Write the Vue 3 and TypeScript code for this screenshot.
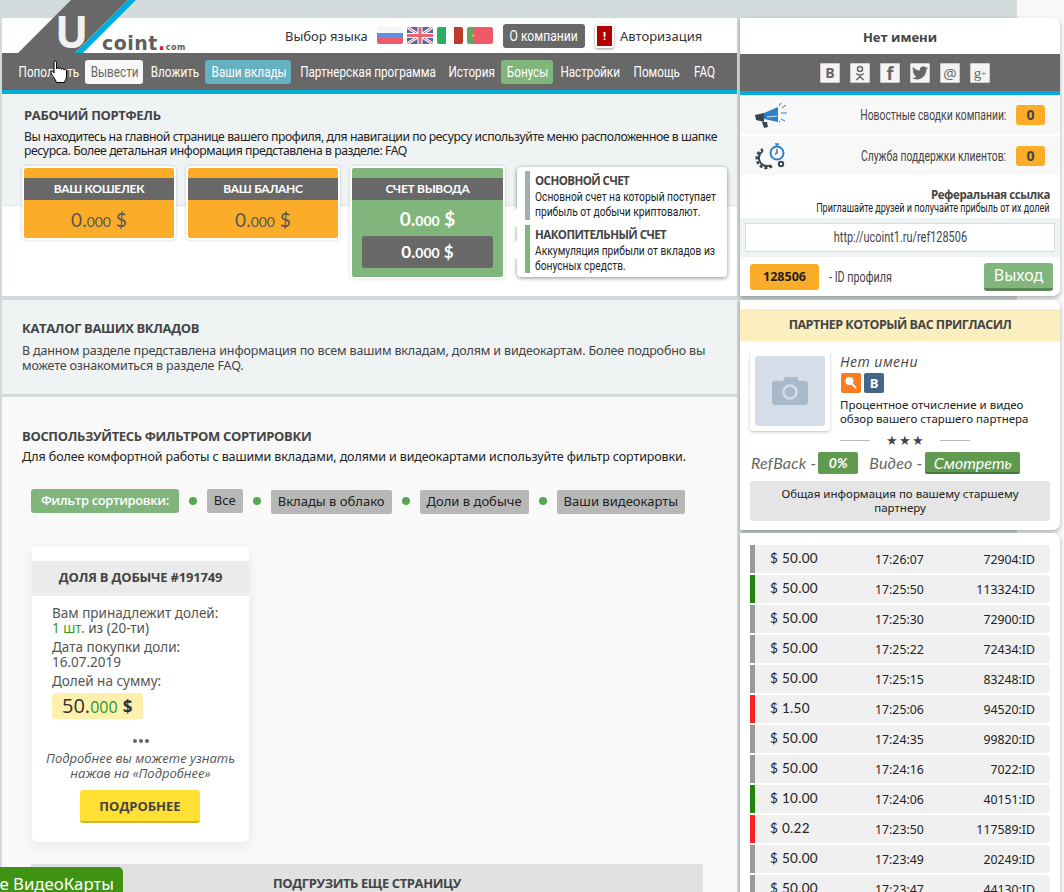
<template>
  <div class="page">
    <!-- logo lies over the header and pokes out above it -->
    <div class="logo">
      <svg width="140" height="53" viewBox="0 0 140 53">
        <polygon points="18,53 71,0 128,0 75,53" fill="#686868" />
        <polygon points="75,53 128,0 136,0 83,53" fill="#00aedb" />
      </svg>
      <span class="logo-u">U</span>
      <span class="logo-coint">coint<i>.</i><small>com</small></span>
    </div>

    <main class="left">
      <header class="top">
        <span class="lang-label">Выбор языка</span>
        <div class="flags">
          <svg width="26" height="17" viewBox="0 0 26 17" class="flag">
            <rect width="26" height="6" fill="#f4f6fa" />
            <rect y="6" width="26" height="5" fill="#5b8fe0" />
            <rect y="11" width="26" height="6" fill="#ef5a6b" />
          </svg>
          <svg width="26" height="17" viewBox="0 0 26 17" class="flag">
            <rect width="26" height="17" fill="#4a6aa8" />
            <path d="M0 0L26 17M26 0L0 17" stroke="#fff" stroke-width="3" />
            <path d="M0 0L26 17M26 0L0 17" stroke="#e9636f" stroke-width="1" />
            <path d="M13 0V17M0 8.500H26" stroke="#fff" stroke-width="5" />
            <path d="M13 0V17M0 8.500H26" stroke="#e9636f" stroke-width="3" />
          </svg>
          <svg width="26" height="17" viewBox="0 0 26 17" class="flag">
            <rect width="9" height="17" fill="#27ae60" />
            <rect x="9" width="8" height="17" fill="#fff" />
            <rect x="17" width="9" height="17" fill="#c0392b" />
          </svg>
          <svg width="26" height="17" viewBox="0 0 26 17" class="flag">
            <rect width="6" height="17" fill="#5fa85f" />
            <rect x="6" width="20" height="17" fill="#ef5a6b" />
            <circle cx="6" cy="8.500" r="1.300" fill="#e8b23a" />
          </svg>
        </div>
        <button class="company"><span class="squeeze">О компании</span></button>
        <span class="alert"><b>!</b></span>
        <span class="auth">Авторизация</span>
      </header>

      <nav class="nav">
        <a
          v-for="item in navItems"
          :key="item.label"
          class="nav-item"
          :class="item.kind"
          :style="{ width: item.width + 'px' }"
        ><span class="squeeze">{{ item.label }}</span></a>
      </nav>

      <section class="portfolio">
        <div class="portfolio-head">
          <h2>РАБОЧИЙ ПОРТФЕЛЬ</h2>
          <p>Вы находитесь на главной странице вашего профиля, для навигации по ресурсу используйте меню расположенное в шапке<br />ресурса. Более детальная информация представлена в разделе: FAQ</p>
        </div>
        <div class="wallets">
          <div v-for="w in wallets" :key="w" class="wallet">
            <div class="wallet-title">{{ w }}</div>
            <div class="wallet-sum">0.<small>000</small> $</div>
          </div>
          <div class="wallet green">
            <div class="wallet-title">СЧЕТ ВЫВОДА</div>
            <div class="wallet-sum">0.<small>000</small> $</div>
            <div class="wallet-sub">0.<small>000</small> $</div>
          </div>
          <div class="hint">
            <div class="hint-row grey">
              <h4>ОСНОВНОЙ СЧЕТ</h4>
              <p class="squeeze-left">Основной счет на который поступает<br />прибыль от добычи криптовалют.</p>
            </div>
            <div class="hint-row lime">
              <h4>НАКОПИТЕЛЬНЫЙ СЧЕТ</h4>
              <p class="squeeze-left">Аккумуляция прибыли от вкладов из<br />бонусных средств.</p>
            </div>
          </div>
        </div>
      </section>

      <section class="catalog">
        <h2>КАТАЛОГ ВАШИХ ВКЛАДОВ</h2>
        <p>В данном разделе представлена информация по всем вашим вкладам, долям и видеокартам. Более подробно вы<br />можете ознакомиться в разделе FAQ.</p>
      </section>

      <section class="filter">
        <h2>ВОСПОЛЬЗУЙТЕСЬ ФИЛЬТРОМ СОРТИРОВКИ</h2>
        <p>Для более комфортной работы с вашими вкладами, долями и видеокартами используйте фильтр сортировки.</p>
        <div class="chips">
          <span class="chip-main">Фильтр сортировки:</span>
          <template v-for="c in chips" :key="c">
            <i class="dot"></i>
            <span class="chip">{{ c }}</span>
          </template>
        </div>

        <article class="share">
          <h3>ДОЛЯ В ДОБЫЧЕ #191749</h3>
          <div class="share-body">
            <p>Вам принадлежит долей:<br /><span class="ok">1 шт.</span> из (20-ти)</p>
            <p>Дата покупки доли:<br />16.07.2019</p>
            <p>Долей на сумму:</p>
            <div class="share-sum">50.<small>000</small> <b>$</b></div>
          </div>
          <div class="share-dots"><i></i><i></i><i></i></div>
          <div class="share-note">Подробнее вы можете узнать<br />нажав на «Подробнее»</div>
          <button class="more">ПОДРОБНЕЕ</button>
        </article>

        <div class="load">ПОДГРУЗИТЬ ЕЩЕ СТРАНИЦУ</div>
      </section>
    </main>

    <aside class="right">
      <div class="box profile">
        <div class="name">Нет имени</div>
        <div class="socials">
          <span class="soc">В</span>
          <span class="soc">
            <svg width="12" height="16" viewBox="0 0 12 16" fill="none" stroke="#666" stroke-width="1.500">
              <circle cx="6" cy="4" r="2.500" />
              <path d="M2 8.500c2.500 1.800 5.500 1.800 8 0M6 10v1.500M2.500 15L6 11.500L9.500 15" />
            </svg>
          </span>
          <span class="soc fb">f</span>
          <span class="soc">
            <svg width="16" height="14" viewBox="0 0 24 20">
              <path fill="#666" d="M24 2.400c-.9.400-1.800.7-2.800.800 1-.6 1.800-1.600 2.200-2.700-1 .6-2 1-3.100 1.200A4.900 4.900 0 0 0 11.900 6.200C7.800 6 4.200 4 1.700.900c-1.300 2.200-.7 5.100 1.500 6.600-.8 0-1.600-.2-2.200-.6 0 2.300 1.600 4.500 4 5-.7.200-1.500.2-2.200.1.600 2 2.400 3.400 4.600 3.400A9.900 9.900 0 0 1 0 17.500 14 14 0 0 0 7.500 19.700c9.100 0 14.300-7.700 14-14.600 1-.7 1.800-1.600 2.500-2.700z" />
            </svg>
          </span>
          <span class="soc at">@</span>
          <span class="soc gp">g<sup>+</sup></span>
        </div>
        <div class="stat">
          <svg width="34" height="30" viewBox="0 0 34 30" fill="none">
            <path d="M0 15l9-2v9l-8-2z" fill="#3b4652" />
            <path d="M9 13l14-6v15l-14-3z" fill="#2f7fc4" />
            <path d="M12 17l10-1" stroke="#d8e6f3" stroke-width="1" />
            <path d="M7 22h5l1 5-4 1z" fill="#3b4652" />
            <path d="M24 6l2-3M27 8l4-3M26 13h6M26 19l4 2M24 21l1 1" stroke="#2f7fc4" stroke-width="1" />
          </svg>
          <span class="stat-label">Новостные сводки компании:</span>
          <b class="badge">0</b>
        </div>
        <div class="stat">
          <svg width="34" height="30" viewBox="0 0 34 30" fill="none">
            <path d="M16 24a8 8 0 1 1-8-14" stroke="#3b4652" stroke-width="2" />
            <path d="M17 25a9.500 9.500 0 1 1-9-16.500" stroke="#3b4652" stroke-width="2.500" stroke-dasharray="3 2" />
            <circle cx="22" cy="12" r="6.500" stroke="#2f7fc4" stroke-width="2" />
            <path d="M22 8v4l-2 1M20 3h4M22 3v2" stroke="#2f7fc4" stroke-width="1.500" />
            <circle cx="26" cy="23" r="2.200" stroke="#3b4652" stroke-width="2" />
          </svg>
          <span class="stat-label">Служба поддержки клиентов:</span>
          <b class="badge">0</b>
        </div>
        <div class="ref-text">
          <b>Реферальная ссылка</b>
          <span>Приглашайте друзей и получайте прибыль от их долей</span>
        </div>
        <div class="ref-strip">
          <div class="ref-input"><span class="squeeze">http://ucoint1.ru/ref128506</span></div>
        </div>
        <div class="ident">
          <b class="ident-num">128506</b>
          <span class="ident-label">- ID профиля</span>
          <button class="logout">Выход</button>
        </div>
      </div>

      <div class="box partner">
        <h3>ПАРТНЕР КОТОРЫЙ ВАС ПРИГЛАСИЛ</h3>
        <div class="partner-main">
          <div class="photo">
            <div class="photo-in">
              <svg width="36" height="28" viewBox="0 0 36 28">
                <path fill="#a9b9c9" d="M3 4h8l2-4h12l2 4h6a3 3 0 0 1 3 3v18a3 3 0 0 1-3 3H3a3 3 0 0 1-3-3V7a3 3 0 0 1 3-3z" />
                <circle cx="18" cy="15" r="6.500" fill="none" stroke="#d5dee8" stroke-width="2.500" />
              </svg>
            </div>
          </div>
          <div class="partner-info">
            <div class="partner-name">Нет имени</div>
            <div class="partner-icons">
              <span class="pi orange">
                <svg width="14" height="14" viewBox="0 0 14 14">
                  <circle cx="5.500" cy="5" r="4" fill="#fff" />
                  <path d="M8 8l4 4" stroke="#fff" stroke-width="2" />
                </svg>
              </span>
              <span class="pi blue">В</span>
            </div>
            <p>Процентное отчисление и видео<br />обзор вашего старшего партнера</p>
          </div>
        </div>
        <div class="stars"><i></i><span>★★★</span><i></i></div>
        <div class="refback">
          <em>RefBack -</em>
          <b class="tag">0%</b>
          <em class="video">Видео -</em>
          <b class="tag watch">Смотреть</b>
        </div>
        <div class="partner-note">Общая информация по вашему старшему партнеру</div>
      </div>

      <div class="box feed">
        <div v-for="row in feed" :key="row.time" class="feed-row" :class="row.color">
          <span class="amount">$ {{ row.amount }}</span>
          <span class="time">{{ row.time }}</span>
          <span class="uid">{{ row.id }}:ID</span>
        </div>
      </div>
    </aside>

    <div class="float-btn">Все ВидеоКарты</div>

    <svg class="cursor" width="20" height="24" viewBox="0 0 20 24">
      <path fill="#fff" stroke="#000" stroke-width="1" d="M4 1.500c1 -1 2.500 -.5 2.500 1V9c0-1.500 2.500-1.500 2.500 0 0-1.500 2.500-1.500 2.500 0.500 0-1.500 2.500-1.500 2.500 0.500 0-1 2.500-1 2.500 1v5c0 3-1.500 4-2 6.500H6.500C5.500 19 2 15.500 1 13c-.5-1.500 1-2.500 2-1.500l1 1.500z" />
    </svg>
  </div>
</template>

<script setup lang="ts">
interface NavItem {
  label: string;
  width: number;
  kind?: string;
}

interface FeedRow {
  amount: string;
  time: string;
  id: number;
  color: string;
}

const navItems: NavItem[] = [
  { label: 'Пополнить', width: 73 },
  { label: 'Вывести', width: 58, kind: 'light' },
  { label: 'Вложить', width: 60 },
  { label: 'Ваши вклады', width: 86, kind: 'teal' },
  { label: 'Партнерская программа', width: 149 },
  { label: 'История', width: 58 },
  { label: 'Бонусы', width: 52, kind: 'lime' },
  { label: 'Настройки', width: 71 },
  { label: 'Помощь', width: 59 },
  { label: 'FAQ', width: 35 },
];

const wallets = ['ВАШ КОШЕЛЕК', 'ВАШ БАЛАНС'];
const chips = ['Все', 'Вклады в облако', 'Доли в добыче', 'Ваши видеокарты'];

const feed: FeedRow[] = [
  { amount: '50.00', time: '17:26:07', id: 72904, color: 'gray' },
  { amount: '50.00', time: '17:25:50', id: 113324, color: 'green' },
  { amount: '50.00', time: '17:25:30', id: 72900, color: 'gray' },
  { amount: '50.00', time: '17:25:22', id: 72434, color: 'gray' },
  { amount: '50.00', time: '17:25:15', id: 83248, color: 'gray' },
  { amount: '1.50', time: '17:25:06', id: 94520, color: 'red' },
  { amount: '50.00', time: '17:24:35', id: 99820, color: 'gray' },
  { amount: '50.00', time: '17:24:16', id: 7022, color: 'gray' },
  { amount: '10.00', time: '17:24:06', id: 40151, color: 'green' },
  { amount: '0.22', time: '17:23:50', id: 117589, color: 'red' },
  { amount: '50.00', time: '17:23:49', id: 20249, color: 'gray' },
  { amount: '50.00', time: '17:23:47', id: 44130, color: 'gray' },
];
</script>

<style scoped>
.page {
  position: relative;
  width: 1064px;
  height: 892px;
  overflow: hidden;
  display: flex;
  align-items: flex-start;
  box-sizing: border-box;
  padding: 18px 0 0 2px;
  gap: 3px;
  background: linear-gradient(90deg, #d2dadc 1017px, #f8f8f8 1017px);
  font-family: "Noto Sans", "Open Sans", sans-serif;
  color: #222;
}

/* no narrow face is installed, so the condensed labels are squeezed Roboto */
.squeeze {
  flex: none;
  white-space: nowrap;
  font-family: "Roboto", sans-serif;
  transform: scaleX(0.78);
}

.squeeze-left {
  white-space: nowrap;
  font-family: "Roboto", sans-serif;
  transform: scaleX(0.76);
  transform-origin: left top;
}

.logo {
  position: absolute;
  left: 0;
  top: 0;
  width: 190px;
  height: 53px;
  z-index: 2;
}

.logo svg {
  display: block;
}

.logo-u {
  position: absolute;
  left: 55px;
  top: 6px;
  font: bold 44px/50px "Open Sans", sans-serif;
  color: #f1f1f1;
}

.logo-coint {
  position: absolute;
  left: 102px;
  top: 32px;
  font: bold 19px/22px "DejaVu Sans", sans-serif;
  color: #5f5f5f;
  letter-spacing: 0.5px;
}

.logo-coint i {
  color: #e02020;
  font-style: normal;
}

.logo-coint small {
  font-size: 8px;
  letter-spacing: 0.5px;
}

.left {
  width: 735px;
  flex: none;
}

.top {
  height: 35px;
  background: #fff;
  display: flex;
  align-items: center;
  box-sizing: border-box;
  padding-left: 283px;
  font-size: 13px;
}

.lang-label {
  width: 92px;
  flex: none;
  color: #333;
}

.flags {
  display: flex;
  gap: 4px;
  margin-right: 10px;
}

.flag {
  border-radius: 2px;
  display: block;
}

.company {
  width: 82px;
  height: 24px;
  border: 0;
  padding: 0;
  border-radius: 3px;
  background: #686868;
  color: #fff;
  font-size: 15.500px;
  line-height: 24px;
  display: flex;
  justify-content: center;
  margin-right: 10px;
}

.alert {
  width: 15px;
  height: 20px;
  background: #b30000;
  border: 2px solid #fff;
  border-radius: 2px;
  box-shadow: 0 1px 3px rgba(0, 0, 0, 0.4);
  color: #fff;
  font-size: 11px;
  line-height: 20px;
  text-align: center;
  margin-right: 6px;
}

.auth {
  color: #333;
}

.nav {
  height: 37px;
  background: #686868;
  border-bottom: 4px solid #00aedb;
  display: flex;
  align-items: center;
  gap: 1px;
  padding-left: 9px;
}

.nav-item {
  height: 24px;
  line-height: 24px;
  flex: none;
  display: flex;
  justify-content: center;
  border-radius: 3px;
  color: #fff;
  font-size: 15px;
}

.nav-item .squeeze {
  transform: translateX(1px) scaleX(0.78);
}

.nav-item.light {
  background: #f8f8f8;
  color: #686868;
}

.nav-item.teal {
  background: #66b1c1;
}

.nav-item.lime {
  background: #80b57b;
}

.portfolio {
  height: 202px;
  background: linear-gradient(#eff3f4 111px, #dfe6e9 111px, #dfe6e9 112px, #fff 112px);
  box-sizing: border-box;
  padding: 12px 22px 0;
}

h2 {
  margin: 0;
  font-size: 13px;
  line-height: 18px;
  font-weight: 700;
  color: #444;
  font-family: "Open Sans", sans-serif;
  letter-spacing: -0.35px;
}

.portfolio-head p,
.catalog p,
.filter > p {
  margin: 0;
  font-size: 12.500px;
  line-height: 14px;
  color: #222;
  white-space: nowrap;
}

.portfolio-head p {
  font-size: 12.200px;
  letter-spacing: -0.42px;
}

.portfolio-head h2 {
  margin-bottom: 6px;
}

.wallets {
  display: flex;
  align-items: flex-start;
  gap: 10px;
  margin: 8px 0 0 -2px;
}

.wallet {
  width: 154px;
  flex: none;
  box-sizing: border-box;
  border: 2px solid #fff;
  border-radius: 4px;
  background: #fbad2a;
  padding-top: 10px;
  height: 74px;
  box-shadow: 0 0 3px rgba(0, 0, 0, 0.2);
  text-align: center;
  color: #565656;
}

.wallet-title {
  height: 22px;
  background: #686868;
  color: #fff;
  font: bold 12px/22px "Lato", sans-serif;
  letter-spacing: -0.3px;
}

.wallet-sum {
  font: 19px/39px "Lato", sans-serif;
}

.wallet-sum small {
  font-size: 14px;
}

.wallet.green {
  height: 113px;
  width: 155px;
  background: #80b57b;
  color: #fff;
}

.wallet.green .wallet-sum {
  font-weight: 700;
  line-height: 37px;
  margin-bottom: -3px;
}

.wallet-sub {
  margin: 0 10px;
  height: 32px;
  background: #686868;
  border-radius: 3px;
  font: bold 17px/32px "Lato", sans-serif;
}

.wallet-sub small {
  font-size: 14px;
}

.hint {
  position: relative;
  left: 2px;
  margin-top: 1px;
  width: 210px;
  height: 110px;
  flex: none;
  box-sizing: border-box;
  padding: 4px 8px;
  background: #fff;
  border-radius: 4px;
  box-shadow: 0 1px 4px rgba(0, 0, 0, 0.45);
  display: flex;
  flex-direction: column;
  gap: 5px;
}

.hint::before,
.hint::after {
  content: "";
  position: absolute;
  left: -7px;
  width: 14px;
  height: 14px;
  background: #fff;
  transform: rotate(45deg);
}

.hint::before {
  top: 44px;
}

.hint::after {
  top: 76px;
}

.hint-row {
  position: relative;
  z-index: 1;
  height: 49px;
  box-sizing: border-box;
  padding: 2px 0 0 5px;
  border-left: 5px solid #9fb0b3;
  font-size: 13.500px;
  line-height: 15px;
}

.hint-row.lime {
  border-left-color: #80b57b;
}

.hint-row h4 {
  margin: 0;
  font-family: "Open Sans", sans-serif;
  font-size: 11.500px;
  letter-spacing: -0.55px;
  color: #444;
  line-height: 16px;
}

.hint-row p {
  margin: 0;
  color: #222;
}

.catalog {
  margin-top: 4px;
  height: 94px;
  background: #eff3f4;
  box-sizing: border-box;
  padding: 19px 20px 0;
}

.catalog h2 {
  margin-bottom: 6px;
}

.catalog p {
  line-height: 15px;
  color: #444;
  letter-spacing: -0.15px;
}

.filter {
  margin-top: 3px;
  height: 500px;
  background: #f9f9f9;
  box-sizing: border-box;
  padding: 30px 20px 0;
  position: relative;
}

.filter h2 {
  margin-bottom: 5px;
}

.filter > p {
  letter-spacing: -0.12px;
}

.chips {
  display: flex;
  align-items: center;
  margin: 24px 0 0 9px;
  height: 26px;
}

.chip-main {
  height: 24px;
  line-height: 23px;
  padding: 0 10px;
  border-radius: 3px;
  background: #80b57b;
  color: #fff;
  font-size: 13px;
  font-weight: 600;
  font-family: "Open Sans", sans-serif;
  letter-spacing: -0.4px;
}

.dot {
  width: 8px;
  height: 8px;
  border-radius: 50%;
  background: #5ba653;
  margin: 0 10px;
  flex: none;
}

.chip {
  height: 24px;
  line-height: 23px;
  padding: 0 7px;
  border-radius: 2px;
  background: #b7b7b7;
  font-size: 13px;
  white-space: nowrap;
}

.dot ~ .dot + .chip {
  margin-top: 2px;
}

.share {
  width: 217px;
  height: 296px;
  margin: 32px 0 0 10px;
  padding-top: 15px;
  box-sizing: border-box;
  background: #fff;
  border-radius: 5px;
  box-shadow: 0 4px 14px rgba(0, 0, 0, 0.07);
  text-align: center;
}

.share h3 {
  margin: 0;
  height: 35px;
  box-sizing: border-box;
  background: #ebebeb;
  border-bottom: 3px solid #f1f1f1;
  font: bold 13px/32px "Open Sans", sans-serif;
  color: #444;
  letter-spacing: -0.2px;
}

.share-body {
  padding: 10px 0 0 20px;
  text-align: left;
  color: #555;
  font-size: 13.500px;
  line-height: 15px;
}

.share-body p {
  margin: 0 0 4px;
}

.ok {
  color: #2f9a1e;
}

.share-sum {
  display: inline-block;
  width: 91px;
  height: 26px;
  padding-left: 10px;
  box-sizing: border-box;
  background: #fff0ae;
  border-radius: 3px;
  font: 20px/26px "Open Sans", sans-serif;
  color: #333;
}

.share-sum small {
  font-size: 16px;
  color: #1b9a2e;
}

.share-sum b {
  font-size: 17px;
}

.share-dots {
  margin-top: 16px;
  height: 12px;
  display: flex;
  justify-content: center;
  align-items: center;
  gap: 2px;
}

.share-dots i {
  width: 4px;
  height: 4px;
  border-radius: 50%;
  background: #666;
}

.share-note {
  margin-top: 4px;
  font: italic 13px/15px "Open Sans", sans-serif;
  color: #555;
}

.more {
  margin: 9px 0 0 -1px;
  width: 120px;
  height: 33px;
  border: 0;
  border-bottom: 2px solid #d4b52a;
  border-radius: 3px;
  background: #ffe033;
  font: bold 13px/30px "Open Sans", sans-serif;
  color: #444;
}

.load {
  margin: 22px 0 0 9px;
  width: 672px;
  height: 28px;
  background: #e1e1e1;
  text-align: center;
  font: bold 13px/38px "Open Sans", sans-serif;
  color: #444;
  letter-spacing: -0.4px;
}

.right {
  width: 320px;
  flex: none;
  display: flex;
  flex-direction: column;
  gap: 4px;
}

.box {
  background: #fff;
  border-radius: 0 7px 7px 0;
  box-shadow: 0 2px 4px rgba(0, 0, 0, 0.3);
}

.profile {
  height: 278px;
}

.name {
  height: 36px;
  text-align: center;
  font: bold 13px/38px "Open Sans", sans-serif;
  color: #444;
}

.socials {
  height: 37px;
  background: #686868;
  border-bottom: 4px solid #00aedb;
  display: flex;
  align-items: center;
  justify-content: center;
  gap: 10px;
  padding-left: 10px;
}

.soc {
  width: 20px;
  height: 20px;
  box-sizing: border-box;
  border-radius: 1px;
  background: #f4f4f4;
  border: 1px solid #ccc;
  display: flex;
  align-items: center;
  justify-content: center;
  font: bold 14px/18px "Open Sans", sans-serif;
  color: #666;
}

.soc.fb {
  font-size: 18px;
}

.soc.at {
  font-weight: 400;
  font-size: 15px;
}

.soc.gp {
  font: 15px/16px "Liberation Serif", serif;
}

.soc.gp sup {
  font-size: 9px;
  line-height: 0;
}

.stat {
  height: 39px;
  background: #f8f8f8;
  margin-bottom: 2px;
  display: flex;
  align-items: center;
  padding: 0 15px;
}

.stat-label {
  margin-left: auto;
  margin-right: 10px;
  font: 14px/20px "Roboto", sans-serif;
  color: #444;
  white-space: nowrap;
  transform: scaleX(0.74);
  transform-origin: right center;
}

.badge {
  width: 29px;
  height: 20px;
  flex: none;
  border-radius: 3px;
  background: #fbad2a;
  text-align: center;
  font: bold 14px/20px "Open Sans", sans-serif;
  color: #444;
}

.ref-text {
  height: 41px;
  box-sizing: border-box;
  padding: 10px 10px 0 0;
  display: flex;
  flex-direction: column;
  align-items: flex-end;
}

.ref-text b {
  font: bold 11.500px/15px "Open Sans", sans-serif;
  color: #444;
  letter-spacing: -0.4px;
}

.ref-text span {
  font: 12px/13px "Roboto", sans-serif;
  color: #222;
  white-space: nowrap;
  transform: scaleX(0.754);
  transform-origin: right center;
}

.ref-strip {
  height: 39px;
  background: #eff3f4;
  box-sizing: border-box;
  padding: 5px;
}

.ref-input {
  height: 29px;
  background: #fff;
  border: 1px solid #d8dddf;
  box-sizing: border-box;
  display: flex;
  justify-content: center;
  font-size: 14px;
  line-height: 27px;
  color: #444;
}

.ident {
  display: flex;
  align-items: center;
  height: 39px;
  padding: 0 7px 0 10px;
}

.ident-num {
  width: 69px;
  height: 26px;
  border-radius: 3px;
  background: #fbad2a;
  text-align: center;
  font: bold 12.500px/26px "Open Sans", sans-serif;
  color: #222;
  flex: none;
}

.ident-label {
  margin-left: 10px;
  font: 14px/26px "Roboto", sans-serif;
  color: #444;
  white-space: nowrap;
  transform: scaleX(0.77);
  transform-origin: left center;
}

.logout {
  margin-left: auto;
  width: 69px;
  height: 28px;
  border: 0;
  border-bottom: 3px solid #5b8558;
  border-radius: 3px;
  background: #80b57b;
  color: #fff;
  font: 16px/24px "Noto Sans", sans-serif;
  padding: 0;
}

.partner {
  height: 230px;
  padding-top: 9px;
  box-sizing: border-box;
}

.partner h3 {
  margin: 0;
  height: 32px;
  background: #fbefc0;
  text-align: center;
  font: bold 12.500px/32px "Open Sans", sans-serif;
  color: #444;
  letter-spacing: -0.5px;
}

.partner-main {
  display: flex;
  padding: 10px 0 0 10px;
  height: 79px;
}

.photo {
  width: 70px;
  height: 70px;
  flex: none;
  padding: 5px;
  border-radius: 3px;
  background: #fff;
  box-shadow: 0 1px 3px rgba(0, 0, 0, 0.25);
}

.photo-in {
  width: 70px;
  height: 70px;
  border-radius: 3px;
  background: #d5dee8;
  display: flex;
  align-items: center;
  justify-content: center;
}

.partner-info {
  margin-left: 10px;
}

.partner-name {
  font: italic 14px/22px "Open Sans", sans-serif;
  color: #444;
  letter-spacing: 0.5px;
}

.partner-icons {
  display: flex;
  gap: 3px;
  margin-left: 1px;
}

.pi {
  width: 20px;
  height: 20px;
  border-radius: 2px;
  display: flex;
  align-items: center;
  justify-content: center;
  color: #fff;
  font: bold 13px/20px "Open Sans", sans-serif;
}

.pi.orange {
  background: #f97d20;
}

.pi.blue {
  background: #446588;
}

.partner-info p {
  margin: 5px 0 0;
  font-size: 11.500px;
  line-height: 14px;
  color: #222;
  white-space: nowrap;
}

.stars {
  display: flex;
  align-items: center;
  justify-content: space-between;
  margin: 3px 0 0 100px;
  width: 130px;
  height: 14px;
  color: #444;
  font-size: 13px;
  letter-spacing: 1px;
}

.stars i {
  width: 30px;
  height: 1px;
  background: #bbb;
}

.refback {
  display: flex;
  align-items: center;
  height: 24px;
  margin: 4px 0 0 11px;
  color: #666;
}

.refback em {
  font: italic 16px/22px "Lato", sans-serif;
  margin-right: 2px;
  letter-spacing: 0.2px;
}

.refback em.video {
  margin-left: 11px;
  margin-right: 3px;
}

.tag {
  width: 40px;
  height: 22px;
  flex: none;
  border-radius: 2px;
  background: #5f9a4f;
  color: #fff;
  text-align: center;
  font: italic bold 14px/22px "Lato", sans-serif;
}

.tag.watch {
  width: 95px;
  font-weight: 400;
  font-size: 16px;
  border-bottom: 2px solid #47783b;
  box-sizing: border-box;
}

.partner-note {
  margin: 6px 10px 0;
  height: 40px;
  box-sizing: border-box;
  padding: 6px 20px;
  border-radius: 3px;
  background: #e5e5e5;
  text-align: center;
  font-size: 11.500px;
  line-height: 14px;
  color: #222;
}

.feed {
  margin-top: -1px;
  padding: 12px 10px 0;
  height: 400px;
  box-sizing: border-box;
}

.feed-row {
  height: 28px;
  margin-bottom: 2px;
  background: #f0f0f0;
  border-left: 5px solid #999;
  border-radius: 0 4px 4px 0;
  display: flex;
  align-items: center;
  box-sizing: border-box;
  padding: 0 15px;
  color: #222;
}

.feed-row.green {
  border-left-color: #22840e;
}

.feed-row.red {
  border-left-color: #ff2020;
}

.amount {
  width: 105px;
  font: 13.500px/26px "Lato", sans-serif;
  letter-spacing: 0.3px;
  margin-top: -2px;
}

.time {
  font-size: 12.300px;
}

.uid {
  margin-left: auto;
  font-size: 12.300px;
}

.float-btn {
  position: absolute;
  right: 941px;
  bottom: 0;
  height: 25px;
  padding: 0 9px;
  background: #3e9313;
  border-radius: 0 5px 0 0;
  color: #fff;
  font-size: 16.800px;
  line-height: 34px;
  white-space: nowrap;
  z-index: 3;
}

.cursor {
  position: absolute;
  left: 50px;
  top: 60px;
  z-index: 4;
}
</style>

<style>
body {
  margin: 0;
  background: #f8f8f8;
}
</style>
